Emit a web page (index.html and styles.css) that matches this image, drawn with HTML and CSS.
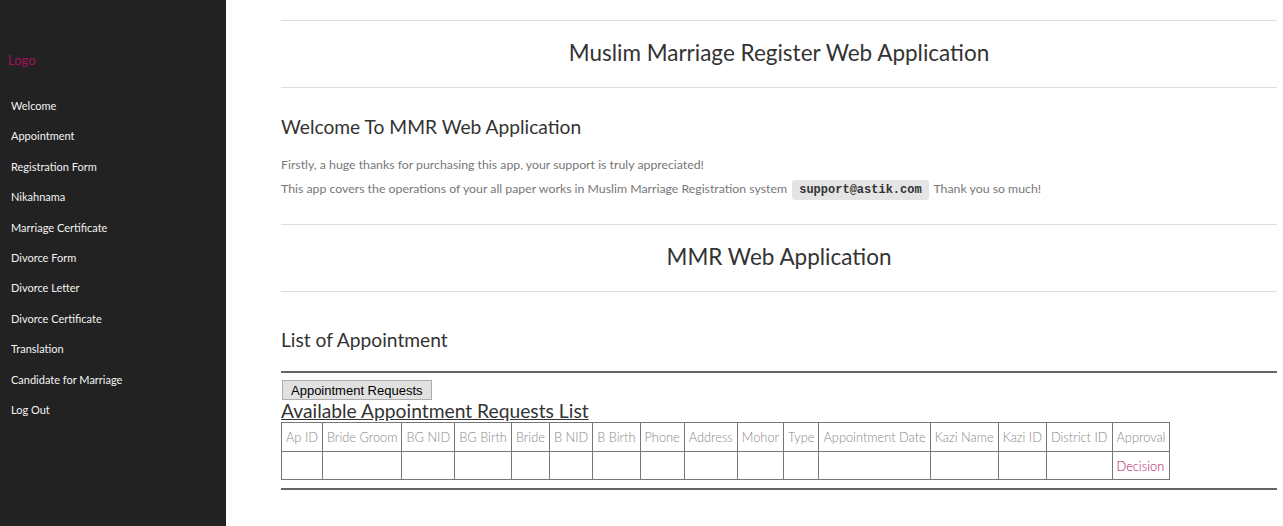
FILE: index.html
```html
<!DOCTYPE html>
<html>
<head>
<meta charset="utf-8">
<title>MMR Web Application</title>
<link rel="stylesheet" href="styles.css">
</head>
<body>
<div class="layout">
  <aside class="sidebar">
    <div class="logo">Logo</div>
    <ul class="nav">
      <li><a href="#">Welcome</a></li>
      <li><a href="#">Appointment</a></li>
      <li><a href="#">Registration Form</a></li>
      <li><a href="#">Nikahnama</a></li>
      <li><a href="#">Marriage Certificate</a></li>
      <li><a href="#">Divorce Form</a></li>
      <li><a href="#">Divorce Letter</a></li>
      <li><a href="#">Divorce Certificate</a></li>
      <li><a href="#">Translation</a></li>
      <li><a href="#">Candidate for Marriage</a></li>
      <li><a href="#">Log Out</a></li>
    </ul>
  </aside>
  <main class="main">
    <div class="banner banner-first"><h1>Muslim Marriage Register Web Application</h1></div>
    <h2 class="section-title welcome">Welcome To MMR Web Application</h2>
    <p class="text">Firstly, a huge thanks for purchasing this app, your support is truly appreciated!</p>
    <p class="text">This app covers the operations of your all paper works in Muslim Marriage Registration system <code class="chip">support@astik.com</code> Thank you so much!</p>
    <div class="banner banner-second"><h1>MMR Web Application</h1></div>
    <h2 class="section-title list-title">List of Appointment</h2>
    <hr class="rule rule-top">
    <button class="btn" type="button">Appointment Requests</button>
    <h3 class="table-title">Available Appointment Requests List</h3>
    <table class="grid">
      <thead>
        <tr>
          <th>Ap ID</th><th>Bride Groom</th><th>BG NID</th><th>BG Birth</th><th>Bride</th><th>B NID</th><th>B Birth</th><th>Phone</th><th>Address</th><th>Mohor</th><th>Type</th><th>Appointment Date</th><th>Kazi Name</th><th>Kazi ID</th><th>District ID</th><th>Approval</th>
        </tr>
      </thead>
      <tbody>
        <tr>
          <td></td><td></td><td></td><td></td><td></td><td></td><td></td><td></td><td></td><td></td><td></td><td></td><td></td><td></td><td></td><td><a href="#" class="decision">Decision</a></td>
        </tr>
      </tbody>
    </table>
    <hr class="rule rule-bottom">
  </main>
</div>
</body>
</html>
```
FILE: styles.css
```css
html, body {
  margin: 0;
  padding: 0;
  background: #fff;
}
body {
  font-family: Lato, "Noto Sans", sans-serif;
  color: #333;
}
.layout {
  display: flex;
  min-height: 100vh;
}
.sidebar {
  width: 226px;
  flex: 0 0 226px;
  background: #222;
  padding-top: 50px;
  box-sizing: border-box;
}
.logo {
  padding-left: 8px;
  font-size: 13px;
  line-height: 20px;
  color: #a3125a;
}
.nav {
  list-style: none;
  margin: 21px 0 0 0;
  padding: 0;
}
.nav li {
  line-height: 30.4px;
}
.nav a {
  display: block;
  padding-left: 11px;
  font-size: 11px;
  color: #f2f2f2;
  text-decoration: none;
}
.main {
  flex: 1;
  padding: 0 6px 0 55px;
  min-width: 0;
}
.banner {
  border-top: 1px solid #ddd;
  border-bottom: 1px solid #ddd;
  height: 66px;
  display: flex;
  align-items: center;
  justify-content: center;
}
.banner-first {
  margin-top: 20px;
}
.banner-second {
  margin-top: 23px;
}
.banner h1 {
  margin: 0 0 2px 0;
  font-size: 22.5px;
  font-weight: 400;
  color: #333;
  line-height: 26px;
}
.section-title {
  margin: 0;
  font-size: 19.2px;
  font-weight: 400;
  line-height: 24px;
  color: #333;
}
.welcome {
  margin-top: 27px;
  margin-bottom: 14px;
}
.list-title {
  margin-top: 36px;
}
.text {
  margin: 0;
  font-size: 12.3px;
  line-height: 24px;
  color: #777;
  font-weight: 400;
}
.chip {
  display: inline-block;
  background: #e4e4e4;
  border-radius: 3px;
  padding: 0 7px;
  margin: 0 2px;
  line-height: 20px;
  font-family: "Liberation Mono", monospace;
  font-size: 12px;
  font-weight: bold;
  color: #333;
}
.rule {
  border: 0;
  border-top: 2px solid #666;
  margin: 0;
  height: 0;
}
.rule-top {
  margin-top: 19px;
}
.rule-bottom {
  margin-top: 8px;
}
.btn {
  display: block;
  margin: 7px 0 0 1px;
  height: 20px;
  padding: 0 8px;
  font-family: "Liberation Sans", Arial, sans-serif;
  font-size: 13px;
  color: #000;
  background: #e1e1e1;
  border: 1px solid #adadad;
  border-radius: 0;
}
.table-title {
  margin: 0;
  font-size: 19.25px;
  font-weight: 400;
  line-height: 22px;
  text-decoration: underline;
  color: #333;
}
.grid {
  border-collapse: collapse;
  font-size: 12.8px;
}
.grid th,
.grid td {
  border: 1px solid #777;
  padding: 0 4px;
  font-weight: 300;
  color: #888;
  white-space: nowrap;
  text-align: left;
}
.grid th {
  height: 28px;
}
.grid td {
  height: 27px;
}
.decision {
  color: #ad1160;
  text-decoration: none;
}
```
